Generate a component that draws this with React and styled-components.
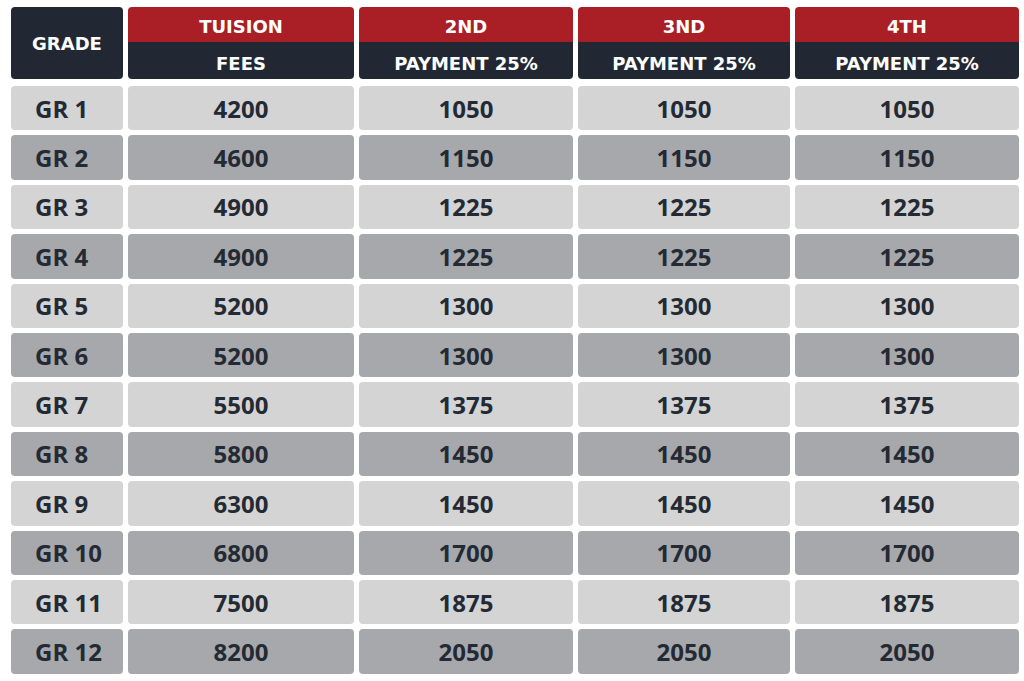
import React from 'react';
import styled, { createGlobalStyle } from 'styled-components';

const GlobalStyle = createGlobalStyle`
  html, body {
    margin: 0;
    padding: 0;
    background: #ffffff;
  }
`;

const rows = [
  ['GR 1', 4200, 1050],
  ['GR 2', 4600, 1150],
  ['GR 3', 4900, 1225],
  ['GR 4', 4900, 1225],
  ['GR 5', 5200, 1300],
  ['GR 6', 5200, 1300],
  ['GR 7', 5500, 1375],
  ['GR 8', 5800, 1450],
  ['GR 9', 6300, 1450],
  ['GR 10', 6800, 1700],
  ['GR 11', 7500, 1875],
  ['GR 12', 8200, 2050],
];

const headers = [
  ['TUISION', 'FEES'],
  ['2ND', 'PAYMENT 25%'],
  ['3ND', 'PAYMENT 25%'],
  ['4TH', 'PAYMENT 25%'],
];

const columns = '112px 226px 214px 212px 224px';

const Wrapper = styled.div`
  display: flex;
  flex-direction: column;
  gap: 7px;
  padding: 7px 0 0 11px;
`;

const HeadRow = styled.div`
  display: grid;
  grid-template-columns: ${columns};
  grid-template-rows: 72px;
  column-gap: 5px;
  font-family: 'DejaVu Sans', 'Liberation Sans', sans-serif;
  font-weight: 700;
  font-size: 18px;
  color: #ffffff;
`;

const Body = styled.div`
  display: grid;
  grid-template-columns: ${columns};
  grid-auto-rows: 44.4px;
  column-gap: 5px;
  row-gap: 5px;
  font-family: 'Open Sans', 'Liberation Sans', sans-serif;
`;

const GradeHead = styled.div`
  background: #212833;
  border-radius: 4px;
  display: flex;
  align-items: center;
  justify-content: center;
  padding-top: 1px;
`;

const HeadCell = styled.div`
  border-radius: 4px;
  overflow: hidden;
  display: grid;
  grid-template-rows: 35px 1fr;
`;

const HeadPart = styled.div`
  background: ${({ top }) => (top ? '#a91f25' : '#212833')};
  display: flex;
  align-items: center;
  justify-content: center;
  padding-top: ${({ top }) => (top ? 4 : 5)}px;
`;

const Cell = styled.div`
  background: ${({ dark }) => (dark ? '#a7a8ac' : '#d4d4d4')};
  border-radius: 4px;
  color: #232a34;
  font-weight: 700;
  font-size: 24px;
  display: flex;
  align-items: center;
  justify-content: ${({ left }) => (left ? 'flex-start' : 'center')};
  padding-left: ${({ left }) => (left ? 24 : 0)}px;
`;

const App = () => (
  <>
    <GlobalStyle />
    <Wrapper>
      <HeadRow>
        <GradeHead>GRADE</GradeHead>
        {headers.map(([top, bottom], i) => (
          <HeadCell key={i}>
            <HeadPart top>{top}</HeadPart>
            <HeadPart>{bottom}</HeadPart>
          </HeadCell>
        ))}
      </HeadRow>
      <Body>
        {rows.map(([grade, fee, part], i) => {
          const dark = i % 2 === 1;
          return (
            <React.Fragment key={grade}>
              <Cell dark={dark} left>{grade}</Cell>
              <Cell dark={dark}>{fee}</Cell>
              <Cell dark={dark}>{part}</Cell>
              <Cell dark={dark}>{part}</Cell>
              <Cell dark={dark}>{part}</Cell>
            </React.Fragment>
          );
        })}
      </Body>
    </Wrapper>
  </>
);

export default App;
